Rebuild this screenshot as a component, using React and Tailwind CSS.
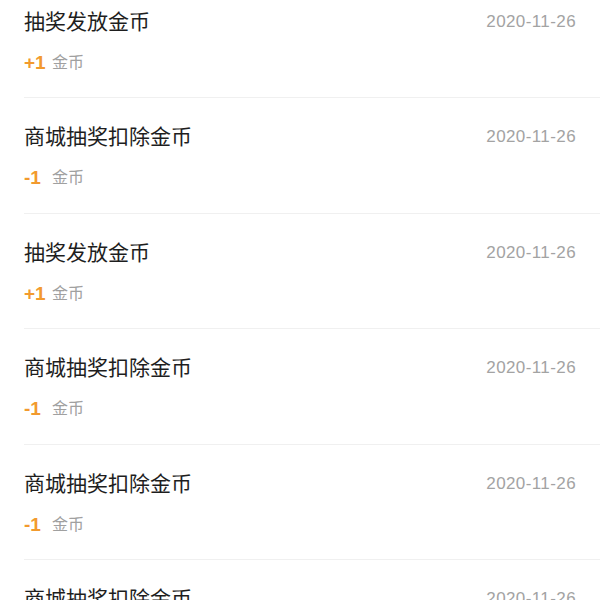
import React from "react";

const rows = [
  { title: "抽奖发放金币", amount: "+1" },
  { title: "商城抽奖扣除金币", amount: "-1" },
  { title: "抽奖发放金币", amount: "+1" },
  { title: "商城抽奖扣除金币", amount: "-1" },
  { title: "商城抽奖扣除金币", amount: "-1" },
  { title: "商城抽奖扣除金币", amount: "-1" },
];

export default function App() {
  return (
    <div
      className="w-[600px] h-[600px] overflow-hidden bg-white"
      style={{ fontFamily: '"Liberation Sans", "Noto Sans CJK SC", sans-serif' }}
    >
      <div className="-mt-[17.5px]">
        {rows.map((r, i) => (
          <div
            key={i}
            className="ml-[24px] pr-[24px] pt-[25px] pb-[20.5px] border-b border-[#f0f0f0]"
          >
            <div className="flex items-center justify-between h-[28px]">
              <span className="text-[21px] leading-[28px] text-[#1e1e1e]">{r.title}</span>
              <span className="text-[17px] leading-[28px] tracking-[0.4px] text-[#a3a3a3]">2020-11-26</span>
            </div>
            <div className="mt-[13px] flex items-center h-[28px]">
              <span className="min-w-[22px] text-[19px] leading-[28px] font-semibold text-[#f29a2e]">{r.amount}</span>
              <span className="ml-[6px] text-[16px] leading-[28px] text-[#a0a0a0]">金币</span>
            </div>
          </div>
        ))}
      </div>
    </div>
  );
}
